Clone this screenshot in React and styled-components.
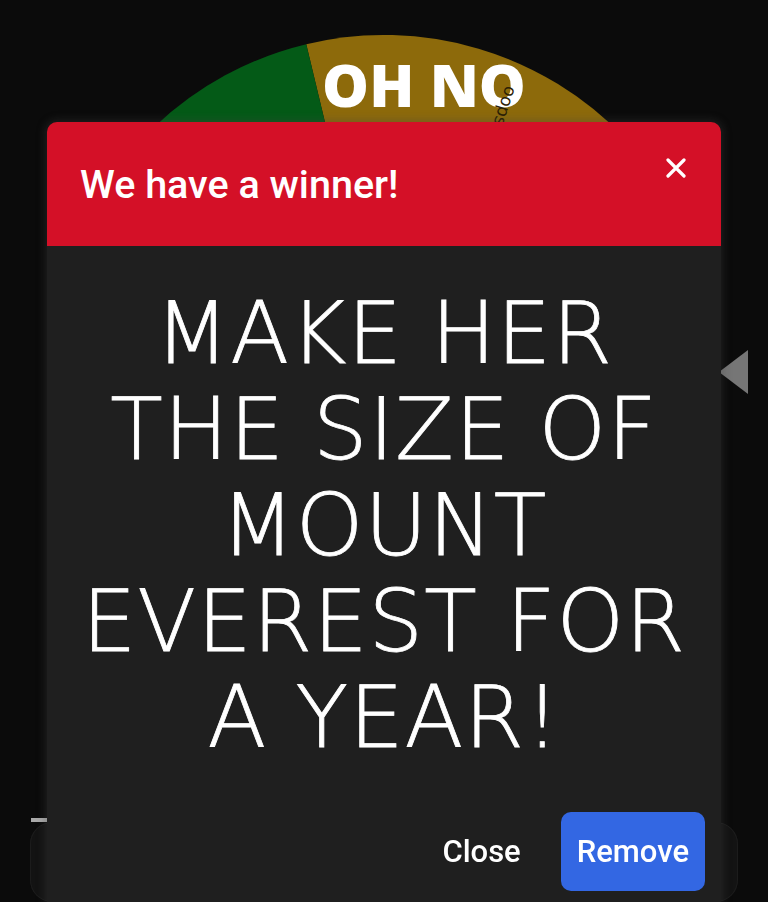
import React from "react";
import styled, { createGlobalStyle } from "styled-components";

const GlobalStyle = createGlobalStyle`
  html, body {
    margin: 0;
    padding: 0;
    background: #0b0b0b;
    overflow: hidden;
  }
`;

const Page = styled.main`
  width: 768px;
  height: 902px;
  display: flex;
  flex-direction: column;
  align-items: center;
  padding-top: 35px;
  box-sizing: border-box;
`;

const WheelWrap = styled.div`
  position: relative;
  width: 666px;
  height: 666px;
`;

const Pointer = styled.svg`
  position: absolute;
  right: -32px;
  top: 314px;
`;

const Panel = styled.section`
  margin-top: 121px;
  width: 708px;
  height: 200px;
  border-radius: 22px;
  background: #131313;
  box-shadow: inset 0 0 0 1px #1c1c1c;
  position: relative;
`;

const Tick = styled.span`
  position: absolute;
  left: 1px;
  top: -4px;
  width: 16px;
  height: 4px;
  background: #a9a9a9;
`;

const Overlay = styled.div`
  position: fixed;
  inset: 0;
  display: flex;
  justify-content: center;
  padding-top: 122px;
  box-sizing: border-box;
`;

const Dialog = styled.div`
  width: 674px;
  height: 800px;
  border-radius: 10px;
  overflow: hidden;
  background: #1f1f1f;
  box-shadow: 0 0 8px 2px rgba(70, 70, 70, 0.35);
  display: flex;
  flex-direction: column;
  flex-shrink: 0;
`;

const Header = styled.header`
  height: 124px;
  background: #d41027;
  display: flex;
  justify-content: space-between;
  align-items: center;
  padding: 0 35px 0 33px;
  box-sizing: border-box;
`;

const Title = styled.h2`
  margin: 0;
  font-family: Roboto, "Liberation Sans", sans-serif;
  font-weight: 500;
  font-size: 39.5px;
  color: #fff;
`;

const CloseIcon = styled.button`
  align-self: flex-start;
  margin-top: 36px;
  width: 20px;
  height: 20px;
  padding: 0;
  border: 0;
  background: none;
  display: flex;
`;

const Body = styled.div`
  flex: 1;
  padding: 39px 20px 0;
  text-align: center;
`;

const Prize = styled.p`
  margin: 0;
  font-family: "DejaVu Sans", sans-serif;
  font-weight: 200;
  font-size: 86px;
  letter-spacing: 1px;
  line-height: 96px;
  color: #fff;
  -webkit-text-stroke: 0.8px #fff;
`;

const Actions = styled.footer`
  display: flex;
  justify-content: flex-end;
  gap: 24px;
  padding: 0 16px 0 0;
  height: 110px;
`;

const Button = styled.button`
  height: 79px;
  padding: 0 16px;
  border: 0;
  border-radius: 10px;
  font-family: Roboto, "Liberation Sans", sans-serif;
  font-weight: 500;
  font-size: 31px;
  color: #fff;
  background: ${(p) => (p.primary ? "#3367e3" : "transparent")};
`;

const slices = [
  { from: -13.5, to: 46.5, color: "#8d6a0b" },
  { from: 46.5, to: 106.5, color: "#6b0d18" },
  { from: 106.5, to: 166.5, color: "#0b3f7a" },
  { from: 166.5, to: 226.5, color: "#4a1462" },
  { from: 226.5, to: 286.5, color: "#7a0c16" },
  { from: 286.5, to: 346.5, color: "#045a17" },
];

function arc(cx, cy, r, a0, a1) {
  const p = (a) => {
    const rad = ((a - 90) * Math.PI) / 180;
    return [cx + r * Math.cos(rad), cy + r * Math.sin(rad)];
  };
  const [x0, y0] = p(a0);
  const [x1, y1] = p(a1);
  return `M${cx} ${cy} L${x0} ${y0} A${r} ${r} 0 0 1 ${x1} ${y1} Z`;
}

function Wheel() {
  return (
    <svg width="666" height="666" viewBox="0 0 666 666">
      {slices.map((s) => (
        <path key={s.from} d={arc(333, 333, 333, s.from, s.to)} fill={s.color} />
      ))}
      <text
        x="373"
        y="72"
        textAnchor="middle"
        fill="#fff"
        fontFamily="'Open Sans', Lato, sans-serif"
        fontWeight="800"
        fontSize="59"
      >
        OH NO
      </text>
      <text
        transform="translate(455 50) rotate(108)"
        fill="#2a2005"
        fontFamily="'DejaVu Sans', sans-serif"
        fontSize="17"
      >
        oops
      </text>
    </svg>
  );
}

export default function App() {
  return (
    <>
      <GlobalStyle />
      <Page>
        <WheelWrap>
          <Wheel />
          <Pointer width="30" height="46" viewBox="0 0 30 46">
            <path d="M29 1 L0 23 L29 45 Z" fill="#767676" />
          </Pointer>
        </WheelWrap>
        <Panel>
          <Tick />
        </Panel>
      </Page>
      <Overlay>
        <Dialog>
          <Header>
            <Title>We have a winner!</Title>
            <CloseIcon aria-label="close">
              <svg width="20" height="20" viewBox="0 0 20 20">
                <path d="M2 2 L18 18 M18 2 L2 18" stroke="#fff" strokeWidth="3.2" strokeLinecap="round" />
              </svg>
            </CloseIcon>
          </Header>
          <Body>
            <Prize>MAKE HER THE SIZE OF MOUNT EVEREST FOR A YEAR!</Prize>
          </Body>
          <Actions>
            <Button>Close</Button>
            <Button primary>Remove</Button>
          </Actions>
        </Dialog>
      </Overlay>
    </>
  );
}
